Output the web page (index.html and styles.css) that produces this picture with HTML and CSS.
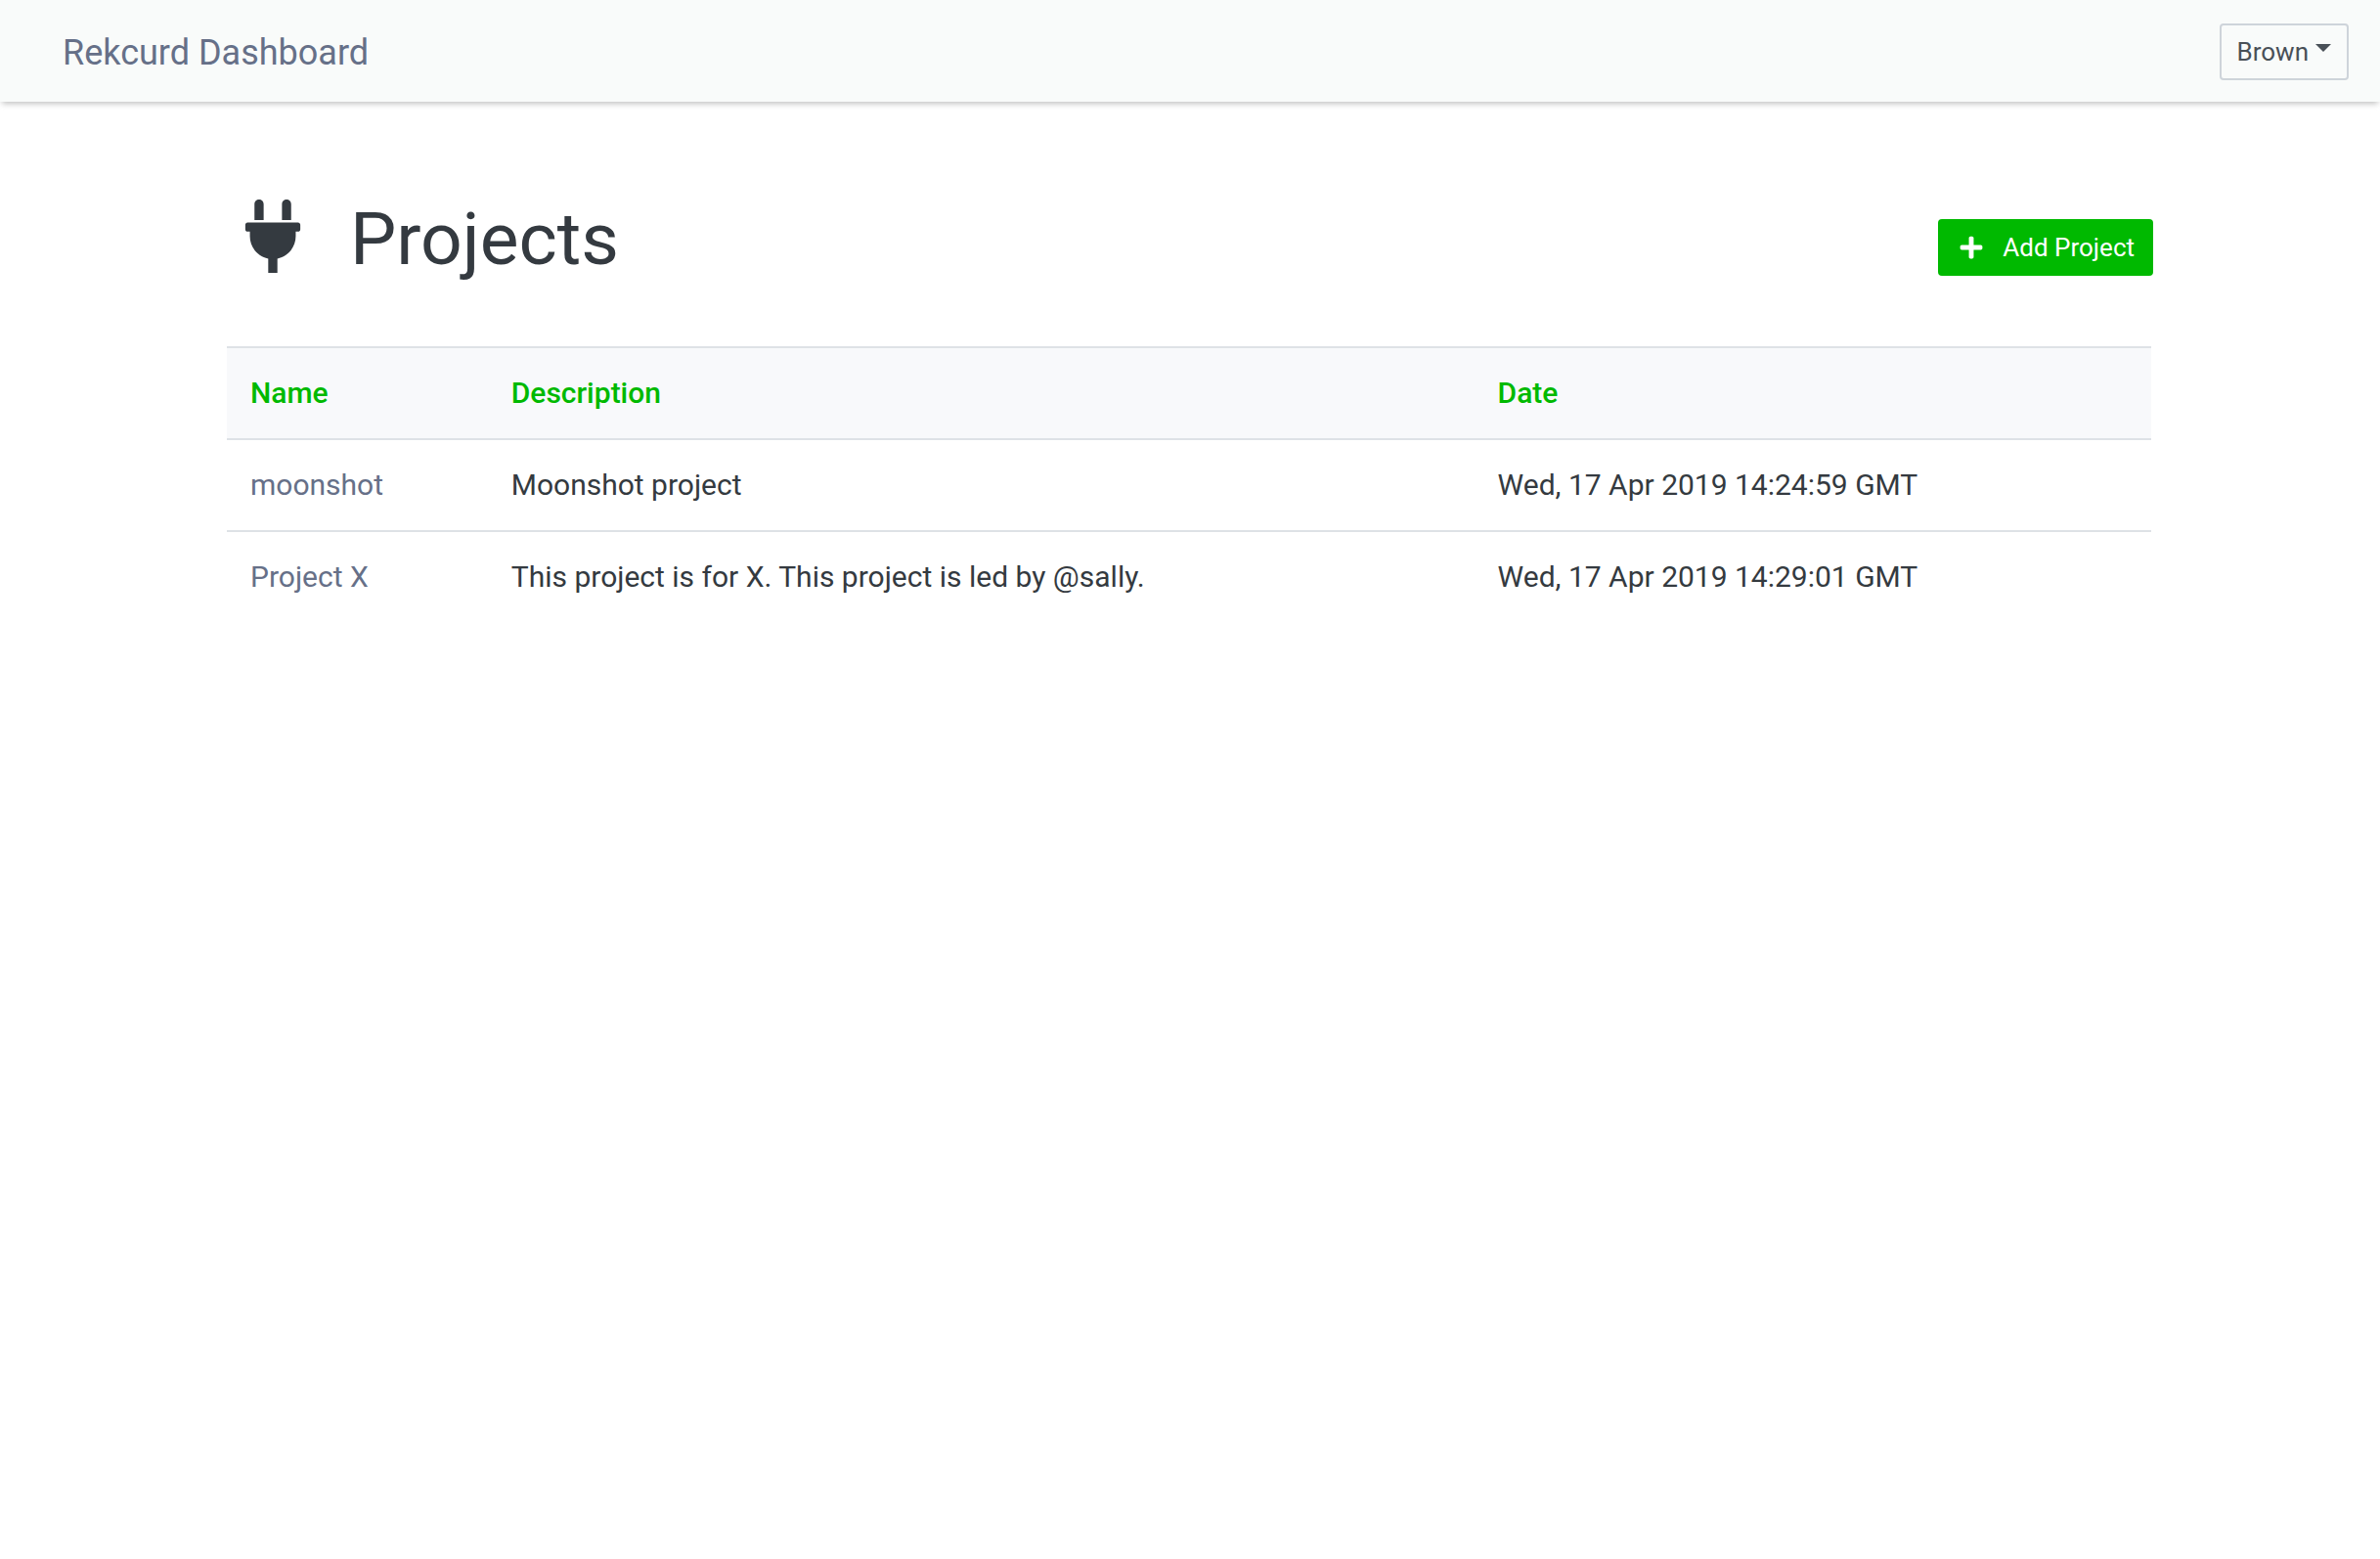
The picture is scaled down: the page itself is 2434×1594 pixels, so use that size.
FILE: index.html
```html
<!DOCTYPE html>
<html lang="en">
<head>
  <meta charset="utf-8">
  <title>Rekcurd Dashboard</title>
  <link rel="stylesheet" href="styles.css">
</head>
<body>
  <header class="navbar">
    <a class="brand" href="#">Rekcurd Dashboard</a>
    <button class="btn btn-user" type="button" aria-haspopup="true">Brown<span class="caret"></span></button>
  </header>
  <main class="container">
    <div class="page-head">
      <h1 class="title">
        <svg class="title-icon" viewBox="0 0 384 512" aria-hidden="true"><path fill="currentColor" d="M256 144V32c0-17.673 14.327-32 32-32s32 14.327 32 32v112h-64zm112 16H16c-8.837 0-16 7.163-16 16v32c0 8.837 7.163 16 16 16h16v32c0 77.406 54.969 141.971 128 156.796V512h64v-99.204c73.031-14.825 128-79.39 128-156.796v-32h16c8.837 0 16-7.163 16-16v-32c0-8.837-7.163-16-16-16zm-240-16V32c0-17.673-14.327-32-32-32S64 14.327 64 32v112h64z"/></svg><span>Projects</span>
      </h1>
      <button class="btn btn-add" type="button">
        <svg class="btn-icon" viewBox="0 0 448 512" aria-hidden="true"><path fill="currentColor" d="M416 208H272V64c0-17.67-14.33-32-32-32h-32c-17.67 0-32 14.33-32 32v144H32c-17.67 0-32 14.33-32 32v32c0 17.67 14.33 32 32 32h144v144c0 17.67 14.33 32 32 32h32c17.67 0 32-14.33 32-32V304h144c17.67 0 32-14.33 32-32v-32c0-17.67-14.33-32-32-32z"/></svg>
        Add Project
      </button>
    </div>
    <div class="table-wrap">
      <table class="table">
        <thead>
          <tr><th scope="col">Name</th><th scope="col">Description</th><th scope="col">Date</th></tr>
        </thead>
        <tbody>
          <tr><td><a href="#">moonshot</a></td><td>Moonshot project</td><td>Wed, 17 Apr 2019 14:24:59 GMT</td></tr>
          <tr><td><a href="#">Project X</a></td><td>This project is for X. This project is led by @sally.</td><td>Wed, 17 Apr 2019 14:29:01 GMT</td></tr>
        </tbody>
      </table>
    </div>
  </main>
</body>
</html>
```
FILE: styles.css
```css
* {
  box-sizing: border-box;
}

body {
  margin: 0;
  background: #fff;
  color: #343a40;
  font-family: Roboto, "Liberation Sans", sans-serif;
  font-size: 30px;
  line-height: 44px;
}

a {
  color: #667088;
  text-decoration: none;
}

.navbar {
  display: flex;
  align-items: center;
  justify-content: space-between;
  padding: 24px 32px 22px 64px;
  background: #f9fbfa;
  box-shadow: 0 4px 6px -2px rgba(0, 0, 0, 0.25);
}

.brand {
  padding-top: 2px;
  font-size: 36px;
}

.btn {
  display: flex;
  align-items: center;
  height: 58px;
  padding: 0 16px;
  border: 2px solid;
  border-radius: 4px;
  font-family: inherit;
  font-size: 26px;
  line-height: 40px;
  cursor: pointer;
}

.btn-user {
  background: transparent;
  border-color: #ced4da;
  color: #495057;
}

.caret {
  margin: 0 0 8px 7px;
  border: 8px solid transparent;
  border-top-color: currentColor;
  border-bottom: 0;
}

.btn-add {
  gap: 16px;
  margin-top: 18px;
  padding: 0 17px 0 16px;
  background: #00b900;
  border-color: #00b900;
  color: #fff;
}

.btn-icon {
  width: 32px;
  height: 26px;
}

.container {
  max-width: 1970px;
  margin: 0 auto;
  padding-top: 95px;
}

.page-head {
  display: flex;
  align-items: center;
  justify-content: space-between;
  margin-bottom: 65px;
}

.title {
  margin: 0;
  font-size: 75px;
  font-weight: 400;
  line-height: 90px;
}

.title-icon {
  width: 94px;
  height: 75px;
  margin-right: 32px;
  vertical-align: -9px;
}

.table-wrap {
  padding-right: 2px;
}

.table {
  width: 100%;
  border-spacing: 0;
}

.table th,
.table td {
  padding: 24px;
  border-top: 2px solid #dee2e6;
  text-align: left;
}

.table th {
  background: #f8f9fb;
  color: #00b900;
  font-weight: 500;
}
```
